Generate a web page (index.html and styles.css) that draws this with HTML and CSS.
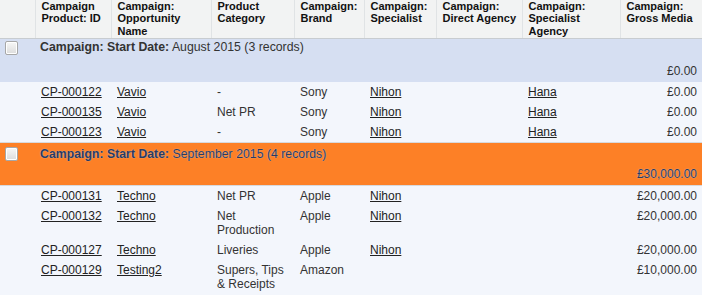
FILE: index.html
```html
<!DOCTYPE html>
<html>
<head>
<meta charset="utf-8">
<link rel="stylesheet" href="styles.css">
</head>
<body>
<table class="report">
  <colgroup>
    <col class="c0"><col class="c1"><col class="c2"><col class="c3"><col class="c4"><col class="c5"><col class="c6"><col class="c7"><col class="c8">
  </colgroup>
  <thead>
    <tr>
      <th></th>
      <th>Campaign Product: ID</th>
      <th>Campaign: Opportunity Name</th>
      <th>Product Category</th>
      <th>Campaign: Brand</th>
      <th>Campaign: Specialist</th>
      <th>Campaign: Direct Agency</th>
      <th>Campaign: Specialist Agency</th>
      <th>Campaign: Gross Media</th>
    </tr>
  </thead>
  <tbody>
    <tr class="group-label blue">
      <td class="chk"><span class="box"></span></td>
      <td colspan="8"><b>Campaign: Start Date:</b> August 2015 (3 records)</td>
    </tr>
    <tr class="group-total blue">
      <td colspan="8"></td>
      <td class="num">£0.00</td>
    </tr>
    <tr class="row">
      <td></td><td><a href="#">CP-000122</a></td><td><a href="#">Vavio</a></td><td>-</td><td>Sony</td><td><a href="#">Nihon</a></td><td></td><td><a href="#">Hana</a></td><td class="num">£0.00</td>
    </tr>
    <tr class="row">
      <td></td><td><a href="#">CP-000135</a></td><td><a href="#">Vavio</a></td><td>Net PR</td><td>Sony</td><td><a href="#">Nihon</a></td><td></td><td><a href="#">Hana</a></td><td class="num">£0.00</td>
    </tr>
    <tr class="row">
      <td></td><td><a href="#">CP-000123</a></td><td><a href="#">Vavio</a></td><td>-</td><td>Sony</td><td><a href="#">Nihon</a></td><td></td><td><a href="#">Hana</a></td><td class="num">£0.00</td>
    </tr>
    <tr class="group-label orange">
      <td class="chk"><span class="box"></span></td>
      <td colspan="8"><b>Campaign: Start Date:</b> September 2015 (4 records)</td>
    </tr>
    <tr class="group-total orange">
      <td colspan="8"></td>
      <td class="num">£30,000.00</td>
    </tr>
    <tr class="row">
      <td></td><td><a href="#">CP-000131</a></td><td><a href="#">Techno</a></td><td>Net PR</td><td>Apple</td><td><a href="#">Nihon</a></td><td></td><td></td><td class="num">£20,000.00</td>
    </tr>
    <tr class="row">
      <td></td><td><a href="#">CP-000132</a></td><td><a href="#">Techno</a></td><td>Net Production</td><td>Apple</td><td><a href="#">Nihon</a></td><td></td><td></td><td class="num">£20,000.00</td>
    </tr>
    <tr class="row">
      <td></td><td><a href="#">CP-000127</a></td><td><a href="#">Techno</a></td><td>Liveries</td><td>Apple</td><td><a href="#">Nihon</a></td><td></td><td></td><td class="num">£20,000.00</td>
    </tr>
    <tr class="row">
      <td></td><td><a href="#">CP-000129</a></td><td><a href="#">Testing2</a></td><td>Supers, Tips &amp; Receipts</td><td>Amazon</td><td></td><td></td><td></td><td class="num">£10,000.00</td>
    </tr>
  </tbody>
</table>
</body>
</html>
```

FILE: styles.css
```css
html, body {
  margin: 0;
  padding: 0;
  background: #f3f6fc;
  overflow: hidden;
}
body {
  font-family: "Liberation Sans", Arial, sans-serif;
  font-size: 12px;
  color: #333;
}
.report {
  width: 702px;
  border-collapse: collapse;
  table-layout: fixed;
}
.c0 { width: 35px; }
.c1 { width: 76px; }
.c2 { width: 100px; }
.c3 { width: 83px; }
.c4 { width: 70px; }
.c5 { width: 72px; }
.c6 { width: 86px; }
.c7 { width: 98px; }
.c8 { width: 82px; }

.report th {
  background: #f2f3f3;
  font-size: 11px;
  font-weight: bold;
  color: #111;
  text-align: left;
  vertical-align: top;
  line-height: 12.3px;
  padding: 0 4px 1px 6px;
  height: 37px;
  border-left: 1px solid #e0e3e5;
  border-bottom: 1px solid #c8ccd0;
}
.report th:first-child { border-left: none; }

.report td {
  padding: 3px 5px 3px 6px;
  line-height: 14px;
  vertical-align: top;
}
.report td.num {
  text-align: right;
  padding-right: 5px;
}
.report a {
  color: #222;
  text-decoration: underline;
}

.blue td { background: #d6dff2; }
.orange td { background: #fd8026; }

.group-label td {
  padding-top: 1px;
  padding-bottom: 6px;
  padding-left: 5px;
  color: #333;
  font-size: 12.3px;
}
.group-label.orange td {
  border-top: 1px solid #d7d9dc;
  padding-top: 4px;
  padding-bottom: 3px;
  color: #2c3a5c;
  text-shadow: 0 0 1px #c9d4ee;
}
.group-total td {
  padding-top: 3px;
  padding-bottom: 4px;
}
.group-total.orange td {
  color: #2c3a5c;
  text-shadow: 0 0 1px #c9d4ee;
}
.group-total.orange + .row td { border-top: 1px solid #d7d9dc; }

.chk { padding-left: 5px !important; }
.box {
  display: block;
  width: 11px;
  height: 12px;
  margin-top: 1px;
  border: 1px solid #a7a7a7;
  border-radius: 2px;
  background: linear-gradient(#f7f7f7, #dcdcdc);
  box-shadow: inset 0 0 0 1px #fff;
}
.orange .box { margin-top: 0; }
```
